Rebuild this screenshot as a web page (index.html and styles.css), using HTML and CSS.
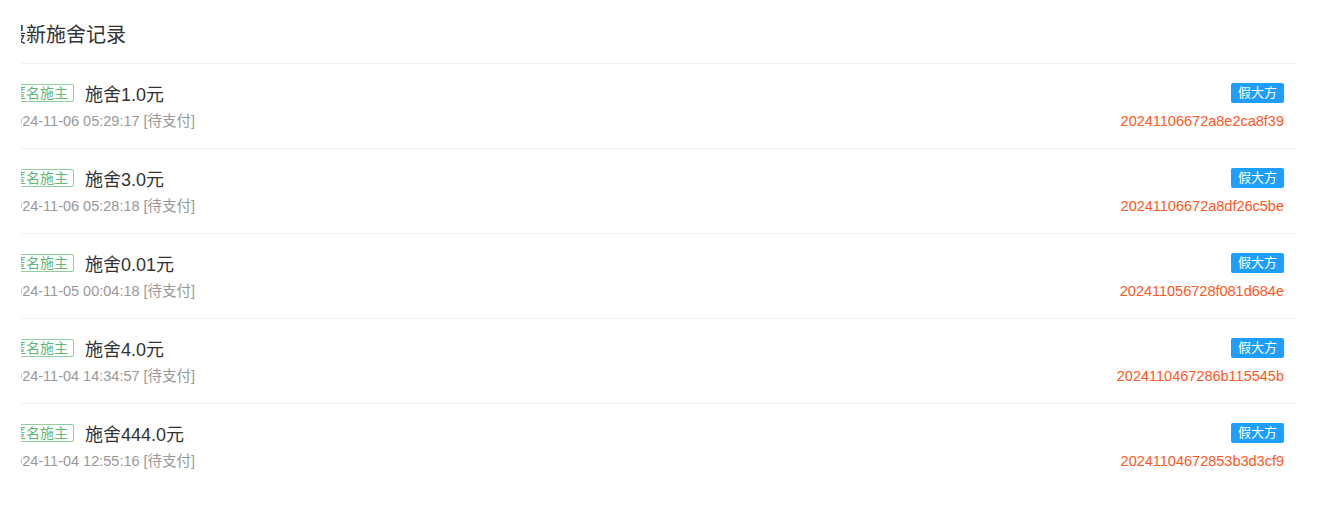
FILE: index.html
```html
<!DOCTYPE html>
<html lang="zh-CN">
<head>
  <meta charset="UTF-8">
  <meta name="viewport" content="width=device-width, initial-scale=1.0">
  <title>最新施舍记录</title>
  <link rel="stylesheet" href="styles.css">
</head>
<body>
  <div class="clip">
    <div class="panel">
      <div class="panel-head">最新施舍记录</div>

      <div class="record">
        <div class="record-main">
          <div class="record-line">
            <span class="tag">匿名施主</span>
            <span class="amount">施舍1.0元</span>
          </div>
          <div class="record-time">2024-11-06 05:29:17 [待支付]</div>
        </div>
        <div class="record-side">
          <div class="record-line"><span class="badge">假大方</span></div>
          <div class="order-no">20241106672a8e2ca8f39</div>
        </div>
      </div>

      <div class="record">
        <div class="record-main">
          <div class="record-line">
            <span class="tag">匿名施主</span>
            <span class="amount">施舍3.0元</span>
          </div>
          <div class="record-time">2024-11-06 05:28:18 [待支付]</div>
        </div>
        <div class="record-side">
          <div class="record-line"><span class="badge">假大方</span></div>
          <div class="order-no">20241106672a8df26c5be</div>
        </div>
      </div>

      <div class="record">
        <div class="record-main">
          <div class="record-line">
            <span class="tag">匿名施主</span>
            <span class="amount">施舍0.01元</span>
          </div>
          <div class="record-time">2024-11-05 00:04:18 [待支付]</div>
        </div>
        <div class="record-side">
          <div class="record-line"><span class="badge">假大方</span></div>
          <div class="order-no">202411056728f081d684e</div>
        </div>
      </div>

      <div class="record">
        <div class="record-main">
          <div class="record-line">
            <span class="tag">匿名施主</span>
            <span class="amount">施舍4.0元</span>
          </div>
          <div class="record-time">2024-11-04 14:34:57 [待支付]</div>
        </div>
        <div class="record-side">
          <div class="record-line"><span class="badge">假大方</span></div>
          <div class="order-no">2024110467286b115545b</div>
        </div>
      </div>

      <div class="record last">
        <div class="record-main">
          <div class="record-line">
            <span class="tag">匿名施主</span>
            <span class="amount">施舍444.0元</span>
          </div>
          <div class="record-time">2024-11-04 12:55:16 [待支付]</div>
        </div>
        <div class="record-side">
          <div class="record-line"><span class="badge">假大方</span></div>
          <div class="order-no">20241104672853b3d3cf9</div>
        </div>
      </div>
    </div>
  </div>
</body>
</html>
```

FILE: styles.css
```css
body {
  margin: 0;
  padding: 0;
  background-color: #fff;
  color: #333;
  font-family: "Liberation Sans", "Noto Sans CJK SC", sans-serif;
}
.clip {
  margin-left: 21px;
  overflow: hidden;
}
.panel {
  margin-left: -27px;
  width: 1302px;
}
.panel-head {
  padding: 20px 12px 13px;
  font-size: 20px;
  line-height: 30px;
  color: #333;
  border-bottom: 1px solid #f2f2f2;
}
.record {
  display: flex;
  justify-content: space-between;
  padding: 17px 12px 15px;
  border-bottom: 1px solid #f2f2f2;
}
.record.last {
  border-bottom: none;
}
.record-line {
  display: flex;
  align-items: center;
  height: 24px;
}
.record-side .record-line {
  justify-content: flex-end;
}
.tag {
  display: inline-block;
  height: 16px;
  line-height: 16px;
  padding: 0 5px;
  font-size: 14px;
  color: #5fb878;
  border: 1px solid #8fd19e;
  border-radius: 2px;
}
.amount {
  margin-left: 11px;
  font-size: 18px;
  color: #333;
}
.record-time {
  margin-top: 4px;
  line-height: 24px;
  font-size: 14.5px;
  color: #999;
}
.badge {
  display: inline-block;
  height: 20px;
  line-height: 20px;
  padding: 0 7px;
  font-size: 13px;
  color: #fff;
  background-color: #1e9fff;
  border-radius: 2px;
}
.order-no {
  margin-top: 4px;
  line-height: 24px;
  font-size: 14.5px;
  color: #ff5722;
  text-align: right;
}
```
